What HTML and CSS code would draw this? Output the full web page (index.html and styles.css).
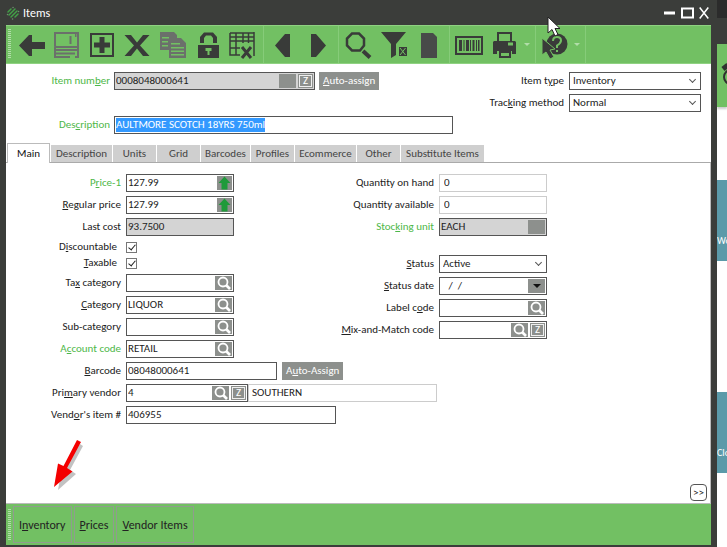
FILE: index.html
```html
<!DOCTYPE html>
<html lang="en">
  <head>
    <meta charset="UTF-8" />
    <title>Items</title>
    <link rel="stylesheet" href="styles.css" />
  </head>
  <body>
    <svg class="symbols" width="0" height="0">
      <symbol id="lens" viewBox="0 0 17 14">
        <circle cx="8" cy="6" r="4.500" fill="none" stroke="#fff" stroke-width="1.800" />
        <path d="M11 9l4 4" stroke="#fff" stroke-width="2.600" />
      </symbol>
      <symbol id="up" viewBox="0 0 15 14">
        <path d="M7.500 0.500l6 6.500h-3v6.500h-6V7h-3z" fill="#1f9a3a" />
      </symbol>
    </svg>

    <main class="window">
      <header class="titlebar">
        <svg class="logo" width="14" height="14" viewBox="0 0 14 14" fill="none" stroke="#43a047" stroke-width="1.500" stroke-linecap="round">
          <path d="M2 6l3-3M3 9l6-6M5 11l6-6M9 11l3-3" />
          <path d="M1.500 8.500h.1M7 1.500h.1M12.500 5.500h.1M6.500 13h.1" stroke="#6d8f6c" />
        </svg>
        <h1>Items</h1>
        <div class="window-controls">
          <button aria-label="Minimize"><svg width="12" height="14" viewBox="0 0 12 14"><path d="M0 7h11" stroke="#fff" stroke-width="3" /></svg></button>
          <button aria-label="Maximize"><svg width="13" height="14" viewBox="0 0 13 14"><path d="M1 2.500h11v9H1z" fill="none" stroke="#fff" stroke-width="2" /></svg></button>
          <button aria-label="Close"><svg width="10" height="14" viewBox="0 0 10 14"><path d="M.7 1.500l8.600 11M9.300 1.500l-8.600 11" stroke="#fff" stroke-width="1.500" /></svg></button>
        </div>
      </header>

      <nav class="toolbar" aria-label="Tools">
        <span class="grip"></span>
        <div class="tools tools-edit">
          <button aria-label="Back"><svg viewBox="0 0 30 30"><path d="M2 15.500L12 5h3v7h13v7H15v7h-3z" /></svg></button>
          <button aria-label="Save" disabled><svg viewBox="0 0 30 30"><path d="M3 3h23v14H4l-1-1z" fill="none" stroke="currentColor" stroke-width="2" /><path d="M17.500 6h2v8h-2zM23 4h1.500v3H23z" /><path d="M3 17v10h15M26 17v10h-3M3 20h23M3 23.500h20" fill="none" stroke="currentColor" stroke-width="2" /></svg></button>
          <button aria-label="New"><svg viewBox="0 0 30 30"><path d="M3 3h24v24H3zM5 5v20h20V5z" fill-rule="evenodd" /><path d="M12.500 7h5v5.500H23v5h-5.500V23h-5v-5.500H7v-5h5.500z" /></svg></button>
          <button aria-label="Delete"><svg viewBox="0 0 30 30"><path d="M2.500 5H9l6 7.500L21 5h6.500L18 15.500 27.500 26H21l-6-7.500L9 26H2.500L12 15.500z" /></svg></button>
          <button aria-label="Copy" disabled><svg viewBox="0 0 30 30"><path d="M2 2h14l3 3v3h-8v12H2zM4 7v1.500h7V7zM4 11v1.500h6V11zM4 15v1.500h6V15z" fill-rule="evenodd" /><path d="M11 8h12l5 5v15H11zM13 13v1.500h9V13zM13 17v1.500h13V17zM13 20.500V22h13v-1.500zM13 24v1.500h13V24z" fill-rule="evenodd" /></svg></button>
          <button aria-label="Lock"><svg viewBox="0 0 30 30"><path d="M7 13V7l4-4.500h9L24 7v6h-4V8l-2-2.500h-5L11 8v5z" /><path d="M5 15h21v13H5zM12.500 18v3h2v4h2v-4h2v-3z" fill-rule="evenodd" /></svg></button>
          <button aria-label="Clear grid"><svg viewBox="0 0 30 30"><path d="M2 3h24M2 3v22h10M2 11h24M2 18h10M8 3v22M15 3v10M20.500 3v10M2 7h24M26 2v24" fill="none" stroke="currentColor" stroke-width="1.500" /><path d="M14 17l9 11M23 17l-9 11" stroke="currentColor" stroke-width="3" /></svg></button>
        </div>
        <div class="tools tools-move">
          <button aria-label="Previous"><svg viewBox="0 0 30 30"><path d="M7 15.500L17 4h5v23h-5z" /></svg></button>
          <button aria-label="Next"><svg viewBox="0 0 30 30"><path d="M23 15.500L13 4H8v23h5z" /></svg></button>
        </div>
        <div class="tools tools-find">
          <button aria-label="Search"><svg viewBox="0 0 30 30"><path d="M9 3.500h7l5 5v7l-4 5H9l-5-5v-7z" fill="none" stroke="currentColor" stroke-width="2.500" /><path d="M20 21l7 6.500" stroke="currentColor" stroke-width="4" /></svg></button>
          <button aria-label="Remove filter"><svg viewBox="0 0 30 30"><path d="M2 2h25L17 14v11l-5 3V14zM20 17h8v9h-8z" /><path d="M21 18l5.500 7M26.500 18L21 25" stroke="#72c063" stroke-width="1" /></svg></button>
          <button aria-label="Document"><svg viewBox="0 0 30 30"><path d="M7 3h12l4 4v21H7z" fill="#484a49" /></svg></button>
        </div>
        <div class="tools tools-print">
          <button aria-label="Barcode"><svg viewBox="0 0 30 30"><path d="M1 6h28v19H1zM3 8v15h24V8z" fill-rule="evenodd" /><path d="M5 10h3v11H5zM9.500 10h1v11h-1zM12 10h3v11h-3zM16 10h1v11h-1zM18.500 10h2v11h-2zM22 10h1v11h-1zM24 10h1.500v11H24z" /></svg></button>
          <button aria-label="Print"><svg viewBox="0 0 30 30"><path d="M8 2h15v9h3l1 1v12h-4v-3H8v3H4V12l1-1h3zM10 4v7h11V4zM19 12.500v3h5v-3z" fill-rule="evenodd" /><path d="M10 21h12v7H10zM12 23v3h8v-3z" fill-rule="evenodd" /></svg></button>
          <button class="more" aria-label="Print options"></button>
        </div>
        <div class="tools tools-help">
          <button aria-label="Help"><svg viewBox="0 0 30 30"><circle cx="18" cy="14" r="10.500" /><path d="M14 11q0-4 4-4t4 3.500q0 2.500-4 5v2.500M18 20v2" fill="none" stroke="#72c063" stroke-width="2" /><path d="M3 8v17l4-3 4 7 4-2-4-7 5-1z" stroke="#72c063" /></svg></button>
          <button class="more" aria-label="Help options"></button>
        </div>
      </nav>

      <section class="item-head">
        <div class="head-left">
          <div class="row">
            <label class="required" for="item-number">Item num<u>b</u>er</label>
            <div class="field locked item-number"><input id="item-number" value="0008048000641" readonly /><button class="mini" aria-label="Look up item"></button><button class="mini zoom">Z</button></div>
            <button class="assign"><u>A</u>uto-assign</button>
          </div>
          <div class="row">
            <label class="required" for="description">Des<u>c</u>ription</label>
            <div class="field description"><input id="description" value="AULTMORE SCOTCH 18YRS 750ml" /></div>
          </div>
        </div>
        <div class="head-right">
          <div class="row">
            <label for="item-type">Item t<u>y</u>pe</label>
            <div class="field pick"><select id="item-type"><option>Inventory</option></select></div>
          </div>
          <div class="row">
            <label for="tracking">Trac<u>k</u>ing method</label>
            <div class="field pick"><select id="tracking"><option>Normal</option></select></div>
          </div>
        </div>
      </section>

      <div class="tabs" role="tablist">
        <button class="active" role="tab">Main</button>
        <button class="tab-description" role="tab">Description</button>
        <button role="tab">Units</button>
        <button role="tab">Grid</button>
        <button class="tab-barcodes" role="tab">Barcodes</button>
        <button role="tab">Profiles</button>
        <button class="tab-ecommerce" role="tab">Ecommerce</button>
        <button role="tab">Other</button>
        <button class="tab-substitute" role="tab">Substitute Items</button>
      </div>

      <section class="panel">
        <div class="columns">
          <div class="column">
            <div class="row">
              <label class="required" for="price">P<u>r</u>ice-1</label>
              <div class="field"><input id="price" value="127.99" /><button class="mini raise" aria-label="Price-1 detail"><svg><use href="#up" /></svg></button></div>
            </div>
            <div class="row">
              <label for="regular"><u>R</u>egular price</label>
              <div class="field"><input id="regular" value="127.99" /><button class="mini raise" aria-label="Regular price detail"><svg><use href="#up" /></svg></button></div>
            </div>
            <div class="row">
              <label for="cost">Last cost</label>
              <div class="field locked"><input id="cost" value="93.7500" readonly /></div>
            </div>
            <div class="checks">
              <div class="check-row"><label for="discountable">D<u>i</u>scountable</label><input type="checkbox" id="discountable" checked /></div>
              <div class="check-row"><label for="taxable"><u>T</u>axable</label><input type="checkbox" id="taxable" checked /></div>
            </div>
            <div class="row">
              <label for="tax">Ta<u>x</u> category</label>
              <div class="field"><input id="tax" /><button class="mini" aria-label="Look up tax category"><svg><use href="#lens" /></svg></button></div>
            </div>
            <div class="row">
              <label for="category"><u>C</u>ategory</label>
              <div class="field"><input id="category" value="LIQUOR" /><button class="mini" aria-label="Look up category"><svg><use href="#lens" /></svg></button></div>
            </div>
            <div class="row">
              <label for="subcategory">Sub-cate<u>g</u>ory</label>
              <div class="field"><input id="subcategory" /><button class="mini" aria-label="Look up sub-category"><svg><use href="#lens" /></svg></button></div>
            </div>
            <div class="row">
              <label class="required" for="account">A<u>c</u>count code</label>
              <div class="field"><input id="account" value="RETAIL" /><button class="mini" aria-label="Look up account code"><svg><use href="#lens" /></svg></button></div>
            </div>
          </div>

          <div class="column column-right">
            <div class="row">
              <label for="on-hand">Quantity on hand</label>
              <div class="field plain"><input id="on-hand" value="0" readonly /></div>
            </div>
            <div class="row">
              <label for="available">Quantity available</label>
              <div class="field plain"><input id="available" value="0" readonly /></div>
            </div>
            <div class="row">
              <label class="required" for="unit">Stoc<u>k</u>ing unit</label>
              <div class="field locked"><input id="unit" value="EACH" readonly /><button class="mini" aria-label="Look up unit"></button></div>
            </div>
            <div class="row status-row">
              <label for="status"><u>S</u>tatus</label>
              <div class="field pick"><select id="status"><option>Active</option></select></div>
            </div>
            <div class="row">
              <label for="status-date"><u>S</u>tatus date</label>
              <div class="field"><input id="status-date" value="   /  /" /><button class="mini drop" aria-label="Open calendar"></button></div>
            </div>
            <div class="row">
              <label for="label-code">Label c<u>o</u>de</label>
              <div class="field"><input id="label-code" /><button class="mini" aria-label="Look up label code"><svg><use href="#lens" /></svg></button></div>
            </div>
            <div class="row">
              <label for="mix"><u>M</u>ix-and-Match code</label>
              <div class="field"><input id="mix" /><button class="mini" aria-label="Look up mix-and-match code"><svg><use href="#lens" /></svg></button><button class="mini zoom">Z</button></div>
            </div>
          </div>
        </div>

        <div class="row">
          <label for="barcode"><u>B</u>arcode</label>
          <div class="field barcode"><input id="barcode" value="08048000641" /></div>
          <button class="assign">A<u>u</u>to-Assign</button>
        </div>
        <div class="row">
          <label for="vendor">Pri<u>m</u>ary vendor</label>
          <div class="field vendor"><input id="vendor" value="4" /><button class="mini" aria-label="Look up vendor"><svg><use href="#lens" /></svg></button><button class="mini zoom">Z</button></div>
          <output class="vendor-name" for="vendor">SOUTHERN</output>
        </div>
        <div class="row">
          <label for="vendor-item">Vend<u>o</u>r's item #</label>
          <div class="field vendor-item"><input id="vendor-item" value="406955" /></div>
        </div>

        <button class="next-page">&gt;&gt;</button>
      </section>

      <nav class="bottom-bar" aria-label="Related">
        <span class="grip"></span>
        <button>I<u>n</u>ventory</button>
        <button><u>P</u>rices</button>
        <button><u>V</u>endor Items</button>
      </nav>

      <svg class="pointer-arrow" width="40" height="60" viewBox="0 0 40 60">
        <path d="M32 8l3 2-13 24 6 4-18 16 4-22z" fill="#777" opacity="0.45" />
        <path d="M29 4l4 2L19 32l5.500 3.500L6 51l4-23.500 5.500 2.500z" fill="#f40000" />
      </svg>
      <svg class="cursor" width="14" height="22" viewBox="0 0 14 22">
        <path d="M1 1v16l4-3.500L8 20l3-1.500-3-6h5z" fill="#fff" stroke="#222" />
      </svg>
    </main>

    <aside class="desktop">
      <div class="desktop-title"></div>
      <div class="desktop-bar">
        <svg width="10" height="40" viewBox="0 0 10 40" fill="none" stroke="#2f322f"><circle cx="14" cy="20" r="7" stroke-width="2" /><path d="M6 12l5-4" stroke-width="5" /></svg>
      </div>
      <div class="tile">Wo</div>
      <div class="tile">Clo</div>
    </aside>
    <script src="script.js"></script>
  </body>
</html>
```

FILE: styles.css
```css
* {
  box-sizing: border-box;
}

body {
  display: flex;
  min-height: 100vh;
  margin: 0;
  background: #fff;
  color: #222;
  font-family: Carlito, Lato, sans-serif;
  font-size: 11px;
  line-height: 14px;
}

button,
input,
select,
output {
  margin: 0;
  padding: 0;
  border: 0;
  border-radius: 0;
  background: none;
  color: inherit;
  font: inherit;
}

.symbols {
  position: absolute;
}

/* window frame */
.window {
  position: relative;
  flex: 1;
  min-width: 0;
  display: flex;
  flex-direction: column;
  padding: 0 6px 2px;
  background: #3b3d3a;
}

.titlebar {
  display: flex;
  align-items: center;
  height: 25px;
  color: #fff;
}

.titlebar h1 {
  margin: 0 0 0 3px;
  font-size: 12px;
  font-weight: 400;
}

.window-controls {
  display: flex;
  gap: 5px;
  margin-left: auto;
  padding-right: 2px;
}

.window-controls svg {
  display: block;
}

/* toolbar */
.toolbar {
  display: flex;
  height: 39px;
  padding-left: 2px;
  background: #72c063;
  border-top: 1px solid #8fd281;
  border-bottom: 1px solid #8fd281;
}

.grip {
  width: 3px;
  margin: 3px 2px 4px 0;
  background: repeating-linear-gradient(#b2ddaa 0 1px, #72c063 1px 2px);
}

.tools {
  display: flex;
  padding: 0 2px 0 1px;
  border-right: 1px solid #86cc79;
}

.tools button {
  flex: 1;
  color: #393b39;
}

.tools button:disabled {
  color: #6b706b;
}

.tools svg {
  display: block;
  width: 30px;
  height: 30px;
  margin: 0 auto;
  fill: currentColor;
}

.tools-edit {
  width: 251px;
}

.tools-move {
  width: 75px;
}

.tools-find {
  width: 111px;
}

.tools-print {
  width: 86px;
}

.tools-help {
  width: 50px;
}

.tools .more {
  flex: 0 0 12px;
}

.more::before {
  content: "";
  display: block;
  width: 0;
  margin: 0 auto;
  border: 3px solid transparent;
  border-top-color: #b2ddaa;
  border-bottom: 0;
}

/* form rows */
.row {
  display: flex;
  align-items: center;
  gap: 5px;
  height: 18px;
  margin-bottom: 4px;
}

.row label,
.check-row label {
  flex: none;
  width: 115px;
  text-align: right;
}

.row .required {
  color: #4eb748;
}

.field {
  position: relative;
  display: flex;
  width: 108px;
  height: 18px;
  padding: 1px;
  border: 1px solid #555;
  background: #fff;
}

.field input,
.field select {
  flex: 1;
  min-width: 0;
  outline: none;
}

.locked {
  background: #d4d4d4;
}

.plain {
  border-color: #ccc;
}

.plain input {
  padding-left: 3px;
}

.mini {
  flex: none;
  width: 17px;
  background: #8d908d;
  color: #fff;
}

.mini svg {
  display: block;
  width: 17px;
  height: 14px;
}

.raise {
  width: 15px;
}

.raise svg {
  width: 15px;
}

.zoom {
  width: 15px;
  margin-left: 2px;
  outline: 1px solid #8d908d;
  outline-offset: -1px;
  box-shadow: inset 0 0 0 2px #eee;
  line-height: 14px;
}

.drop::before {
  content: "";
  display: block;
  width: 0;
  margin: 0 auto;
  border: 4px solid transparent;
  border-top-color: #111;
  border-bottom: 0;
}

.pick select {
  appearance: none;
  padding-left: 2px;
}

.pick::after {
  content: "";
  position: absolute;
  top: 4px;
  right: 5px;
  width: 4px;
  height: 4px;
  border: solid #555;
  border-width: 0 1px 1px 0;
  transform: rotate(45deg);
}

.assign {
  height: 18px;
  padding: 0 4px;
  background: #8d908d;
  color: #fff;
}

/* item header */
.item-head {
  display: flex;
  justify-content: space-between;
  padding: 8px 10px 0 0;
  background: #fff;
}

.head-left label {
  width: 103px;
}

.head-left .row {
  gap: 4px;
}

.head-left .row label {
  width: 104px;
}

.head-left .row + .row {
  margin: 26px 0 9px;
}

.item-number {
  width: 201px;
}

.description {
  width: 339px;
}

.description input::selection {
  background: #3399ff;
  color: #fff;
}

.head-right .row {
  justify-content: flex-end;
}

.head-right label {
  width: auto;
}

.head-right .field {
  width: 132px;
}

/* tabs */
.tabs {
  display: flex;
  align-items: flex-end;
  gap: 1px;
  padding-left: 1px;
  background: #fff;
  border-bottom: 1px solid #aaa;
}

.tabs button {
  width: 43px;
  height: 17px;
  background: #cfcfcf;
  color: #444;
}

.tabs .active {
  height: 20px;
  margin-bottom: -1px;
  border: 1px solid #bbb;
  border-bottom: 0;
  background: #fff;
  color: #111;
}

.tabs .tab-description {
  width: 61px;
}

.tabs .tab-barcodes {
  width: 49px;
}

.tabs .tab-ecommerce {
  width: 61px;
}

.tabs .tab-substitute {
  width: 83px;
}

/* main panel */
.panel {
  position: relative;
  flex: 1;
  padding-top: 11px;
  background: #fff;
  border-right: 1px solid #bbb;
  border-bottom: 1px solid #bbb;
}

.columns {
  display: flex;
}

.column-right label {
  width: 200px;
}

.column-right .status-row {
  margin-top: 19px;
}

.checks {
  margin: -1px 0 3px;
}

.check-row {
  display: flex;
  align-items: center;
  gap: 9px;
  height: 16px;
}

.check-row label {
  width: 111px;
}

.check-row input {
  appearance: none;
  width: 11px;
  height: 11px;
  border: 1px solid #777;
}

.check-row input:checked::before {
  content: "";
  display: block;
  width: 3px;
  height: 6px;
  margin: 0 0 0 3px;
  border: solid #222;
  border-width: 0 1px 1px 0;
  transform: rotate(40deg);
}

.barcode {
  width: 151px;
}

.vendor {
  width: 122px;
}

.vendor-name {
  width: 189px;
  height: 18px;
  margin-left: -5px;
  padding: 1px 3px;
  border: 1px solid #ccc;
}

.vendor-item {
  width: 210px;
}

.next-page {
  position: absolute;
  right: 3px;
  bottom: 2px;
  width: 17px;
  height: 17px;
  border: 1px solid #555;
  border-radius: 4px;
}

/* bottom bar */
.bottom-bar {
  display: flex;
  gap: 2px;
  height: 41px;
  padding: 2px;
  background: #72c063;
}

.bottom-bar .grip {
  margin: 3px 0 3px 0;
}

.bottom-bar button {
  padding: 0 5px;
  border: 1px solid #909c8e;
  font-size: 12px;
}

/* overlays */
.pointer-arrow {
  position: absolute;
  left: 48px;
  top: 436px;
}

.cursor {
  position: absolute;
  left: 547px;
  top: 16px;
}

/* desktop behind the window */
.desktop {
  width: 10px;
  overflow: hidden;
}

.desktop-title {
  height: 44px;
  background: linear-gradient(#2b2b2b 18px, #3b3d3a 18px);
}

.desktop-bar {
  height: 63px;
  background: #72c063;
  box-shadow: 0 2px 2px #ccc;
}

.desktop-bar svg {
  margin-top: 13px;
}

.tile {
  height: 81px;
  margin-top: 73px;
  padding-top: 54px;
  background: #5b9aa9;
  color: #fff;
  font-size: 10px;
}

.tile + .tile {
  margin-top: 131px;
}
```

FILE: script.js
```js
const description = document.getElementById("description");
description.focus();
description.select();
```
